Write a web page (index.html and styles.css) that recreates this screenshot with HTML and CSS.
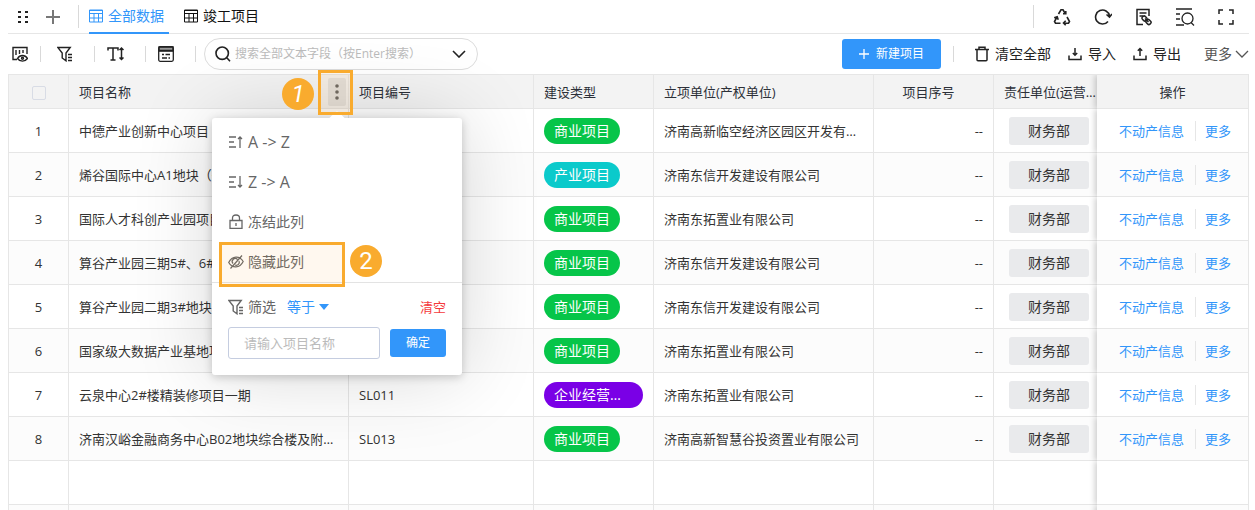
FILE: index.html
```
<!DOCTYPE html>
<html lang="zh-CN">
<head>
  <meta charset="utf-8">
  <title>全部数据</title>
  <meta name="viewport" content="width=device-width, initial-scale=1">
  <link rel="stylesheet" href="styles.css">
</head>
<body>
  <svg class="defs" aria-hidden="true">
    <symbol id="i-grid" viewBox="0 0 14 14"><path d="M.5 1h13v12H.5zM.5 4.500h13M.5 9h13M5 4.500V13M9.500 4.500V13M.5 1.500h13"/></symbol>
    <symbol id="i-filter" viewBox="0 0 16 16"><path d="M.8 1.500h12.400L9 7v7.800L5.200 12V7zM11 8.500h4M11 11.500h4M11 14.500h4" stroke-width="1.400"/></symbol>
    <symbol id="i-down" viewBox="0 0 14 8"><path d="M1 1l6 6 6-6"/></symbol>
  </svg>

  <nav class="tabbar">
    <button class="icon-btn drag" aria-label="拖动"><svg width="12" height="14" viewBox="0 0 12 14"><g fill="currentColor" stroke="none"><path d="M1 1h3v2H1zM8 1h3v2H8zM1 6h3v2H1zM8 6h3v2H8zM1 11h3v2H1zM8 11h3v2H8z"/></g></svg></button>
    <button class="icon-btn add" aria-label="添加"><svg width="14" height="14" viewBox="0 0 14 14"><path d="M7 0v14M0 7h14" stroke-width="2"/></svg></button>
    <span class="line"></span>
    <a class="tab active" href="#all"><svg width="14" height="14"><use href="#i-grid"/></svg>全部数据</a>
    <a class="tab" href="#done"><svg width="14" height="14"><use href="#i-grid"/></svg>竣工项目</a>
    <div class="tools">
      <span class="line"></span>
      <button class="icon-btn" aria-label="回收站"><svg width="18" height="18" viewBox="0 0 18 18" stroke-width="1.600"><path d="M5.500 6L8 1.800h2L12.500 6M10 5.800h2.800V3M14 9l2.500 4.500-1 1.700H11M12.700 12.700L10.500 15l2.200 2.300M7.500 15.200h-5l-1-1.700L4 9M1.200 9.700L4.200 8.700l1 3"/></svg></button>
      <button class="icon-btn" aria-label="刷新"><svg width="18" height="18" viewBox="0 0 18 18" stroke-width="1.600"><path d="M14 13.500a7 7 0 1 1 1.500-5.500M12.500 6.500l3 2.500L18 6"/></svg></button>
      <button class="icon-btn" aria-label="关联"><svg width="18" height="18" viewBox="0 0 18 18" stroke-width="1.500"><path d="M8 16.500H2v-15h12V8M4.500 5h7M4.500 8H8"/><rect x="7" y="8.500" width="5" height="4" rx="1.500" transform="rotate(45 9.500 10.500)"/><rect x="11" y="12" width="5" height="4" rx="1.500" transform="rotate(45 13.500 14)"/><path d="M10 10.500l3.500 3.500"/></svg></button>
      <button class="icon-btn" aria-label="查找"><svg width="20" height="18" viewBox="0 0 20 18" stroke-width="1.300"><path d="M1 1h16M1 6h4M1 11h4M1 17h8"/><circle cx="12.500" cy="10.500" r="5.500"/><path d="M16 14.500l3 3"/></svg></button>
      <button class="icon-btn" aria-label="全屏"><svg width="16" height="16" viewBox="0 0 16 16" stroke-width="1.500"><path d="M1 5V1h4M11 1h4v4M15 11v4h-4M5 15H1v-4"/></svg></button>
    </div>
  </nav>

  <div class="toolbar">
    <div class="view-tools">
      <button class="icon-btn" aria-label="显示列"><svg width="16" height="16" viewBox="0 0 16 16" stroke-width="1.400"><path d="M5 13.500H1V1.500h14V8M4 4v5M7.500 4v4M11 4v3M5.500 12.500c2.500-4 7.500-4 10 0-2.500 3.500-7.500 3.500-10 0z"/><circle cx="10.500" cy="12.300" r="1"/></svg></button>
      <span class="sep"></span>
      <button class="icon-btn" aria-label="筛选"><svg width="16" height="16"><use href="#i-filter"/></svg></button>
      <span class="sep"></span>
      <button class="icon-btn" aria-label="行高"><svg width="17" height="16" viewBox="0 0 17 16"><path d="M1 4.500V2h10v2.500M6 2v12M3.500 14h5M14.500 2v11M12.500 4l2-2 2 2M12.500 11.500l2 2 2-2" stroke-width="1.500"/></svg></button>
      <span class="sep"></span>
      <button class="icon-btn" aria-label="表单"><svg width="16" height="16" viewBox="0 0 16 16" stroke-width="1.300"><path d="M1 1h14v3.500H1z" fill="#999"/><rect x=".7" y=".7" width="14.600" height="14.600" rx="1.500"/><path d="M1 5h14M4 8.500h2M7.500 8.500H12M4 12h5M10.500 12H12"/></svg></button>
      <span class="sep"></span>
    </div>
    <label class="search">
      <svg width="16" height="16" viewBox="0 0 16 16" stroke-width="1.600"><circle cx="7.200" cy="7.200" r="6.200"/><path d="M11.800 11.800L15 15.200"/></svg>
      <input type="text" aria-label="搜索" placeholder="搜索全部文本字段（按Enter搜索）">
      <svg width="14" height="8" stroke-width="1.600"><use href="#i-down"/></svg>
    </label>
    <button class="primary create"><svg width="10" height="10" viewBox="0 0 10 10"><path d="M5 0v10M0 5h10" stroke-width="1.300"/></svg>新建项目</button>
    <span class="sep"></span>
    <div class="actions">
      <button class="text-btn"><svg width="14" height="16" viewBox="0 0 14 16" stroke-width="1.500"><path d="M0 3.500h14M4 3.500V1.200h6v2.300M2 3.500v10.200q0 1 1 1h8q1 0 1-1V3.500"/></svg>清空全部</button>
      <button class="text-btn"><svg width="14" height="14" viewBox="0 0 14 14" stroke-width="1.500"><path d="M1 8.500v4h12v-4M7 1v7M4.800 6L7 8.200 9.200 6"/></svg>导入</button>
      <button class="text-btn"><svg width="14" height="14" viewBox="0 0 14 14" stroke-width="1.500"><path d="M1 8.500v4h12v-4M7 9V1.500M4.800 3.700L7 1.500l2.200 2.200"/></svg>导出</button>
      <button class="text-btn more">更多<svg width="14" height="8" stroke-width="1.300"><use href="#i-down"/></svg></button>
    </div>
  </div>

  <main>
    <table class="grid">
      <colgroup>
        <col class="c-idx"><col class="c-name"><col class="c-code"><col class="c-type"><col class="c-org"><col class="c-no"><col><col class="c-ops">
      </colgroup>
      <thead>
        <tr>
          <th class="center"><input type="checkbox" aria-label="全选"></th>
          <th class="name-head">
            <div class="head-cell">
              项目名称
              <div class="col-menu">
                <button class="dots" aria-label="列菜单"><svg width="4" height="16" viewBox="0 0 4 16"><g fill="#666" stroke="none"><circle cx="2" cy="2" r="1.800"/><circle cx="2" cy="8" r="1.800"/><circle cx="2" cy="14" r="1.800"/></g></svg></button>
                <div class="popup">
                  <button class="item"><svg width="14" height="14" viewBox="0 0 14 14"><path d="M0 2h7M0 7h5M0 12h7M11 13V2M9 4l2-2 2 2" stroke-width="1.300"/></svg>A -&gt; Z</button>
                  <button class="item"><svg width="14" height="14" viewBox="0 0 14 14"><path d="M0 2h7M0 7h5M0 12h7M11 1v11M9 10l2 2 2-2" stroke-width="1.300"/></svg>Z -&gt; A</button>
                  <button class="item cn"><svg width="14" height="16" viewBox="0 0 14 16"><path d="M1 6.500h12v7.800H1zM3.500 6.500V4q0-3 3.500-3t3.500 3v2.500M7 9v3" stroke-width="1.300"/></svg>冻结此列</button>
                  <div class="hide-row">
                    <button class="item cn"><svg width="16" height="14" viewBox="0 0 16 14"><path d="M.7 7.500c3.500-7 11-7 14.500-1-3.500 7-11 7-14.500 1zM14 .5L2.500 13.500M5 8.500a3 3 0 0 1 4.500-4M11 6a3 3 0 0 1-4 4" stroke-width="1.200"/></svg>隐藏此列</button>
                    <span class="mark mark-hide"></span>
                    <span class="badge badge-two">2</span>
                  </div>
                  <div class="filter">
                    <div class="filter-top">
                      <svg width="16" height="16"><use href="#i-filter"/></svg>
                      <label for="op">筛选</label>
                      <select id="op"><option>等于</option></select>
                      <svg class="caret" width="10" height="6" viewBox="0 0 10 6"><path d="M0 0h10L5 6z" fill="currentColor" stroke="none"/></svg>
                      <button class="clear">清空</button>
                    </div>
                    <div class="filter-form">
                      <input type="text" aria-label="项目名称" placeholder="请输入项目名称">
                      <button class="primary">确定</button>
                    </div>
                  </div>
                </div>
                <span class="mark mark-menu"></span>
                <span class="badge badge-one">1</span>
              </div>
            </div>
          </th>
          <th>项目编号</th>
          <th>建设类型</th>
          <th>立项单位(产权单位)</th>
          <th class="no-head center">项目序号</th>
          <th class="cut">责任单位(运营单位)</th>
          <th class="ops-head center">操作</th>
        </tr>
      </thead>
      <tbody>
        <tr>
          <td class="center">1</td><td>中德产业创新中心项目</td><td></td>
          <td><span class="tag green">商业项目</span></td><td>济南高新临空经济区园区开发有限公司</td>
          <td class="right">--</td><td class="dept-cell"><span class="dept">财务部</span></td>
          <td class="ops"><div><a href="#info">不动产信息</a><a href="#more">更多</a></div></td>
        </tr>
        <tr>
          <td class="center">2</td><td>烯谷国际中心A1地块（一期）</td><td></td>
          <td><span class="tag cyan">产业项目</span></td><td>济南东信开发建设有限公司</td>
          <td class="right">--</td><td class="dept-cell"><span class="dept">财务部</span></td>
          <td class="ops"><div><a href="#info">不动产信息</a><a href="#more">更多</a></div></td>
        </tr>
        <tr>
          <td class="center">3</td><td>国际人才科创产业园项目</td><td></td>
          <td><span class="tag green">商业项目</span></td><td>济南东拓置业有限公司</td>
          <td class="right">--</td><td class="dept-cell"><span class="dept">财务部</span></td>
          <td class="ops"><div><a href="#info">不动产信息</a><a href="#more">更多</a></div></td>
        </tr>
        <tr>
          <td class="center">4</td><td>算谷产业园三期5#、6#地块</td><td></td>
          <td><span class="tag green">商业项目</span></td><td>济南东信开发建设有限公司</td>
          <td class="right">--</td><td class="dept-cell"><span class="dept">财务部</span></td>
          <td class="ops"><div><a href="#info">不动产信息</a><a href="#more">更多</a></div></td>
        </tr>
        <tr>
          <td class="center">5</td><td>算谷产业园二期3#地块</td><td></td>
          <td><span class="tag green">商业项目</span></td><td>济南东信开发建设有限公司</td>
          <td class="right">--</td><td class="dept-cell"><span class="dept">财务部</span></td>
          <td class="ops"><div><a href="#info">不动产信息</a><a href="#more">更多</a></div></td>
        </tr>
        <tr>
          <td class="center">6</td><td>国家级大数据产业基地项目</td><td></td>
          <td><span class="tag green">商业项目</span></td><td>济南东拓置业有限公司</td>
          <td class="right">--</td><td class="dept-cell"><span class="dept">财务部</span></td>
          <td class="ops"><div><a href="#info">不动产信息</a><a href="#more">更多</a></div></td>
        </tr>
        <tr>
          <td class="center">7</td><td>云泉中心2#楼精装修项目一期</td><td>SL011</td>
          <td><span class="tag purple">企业经营性项目</span></td><td>济南东拓置业有限公司</td>
          <td class="right">--</td><td class="dept-cell"><span class="dept">财务部</span></td>
          <td class="ops"><div><a href="#info">不动产信息</a><a href="#more">更多</a></div></td>
        </tr>
        <tr>
          <td class="center">8</td><td>济南汉峪金融商务中心B02地块综合楼及附属设施</td><td>SL013</td>
          <td><span class="tag green">商业项目</span></td><td>济南高新智慧谷投资置业有限公司</td>
          <td class="right">--</td><td class="dept-cell"><span class="dept">财务部</span></td>
          <td class="ops"><div><a href="#info">不动产信息</a><a href="#more">更多</a></div></td>
        </tr>
        <tr><td></td><td></td><td></td><td></td><td></td><td></td><td class="dept-cell"></td><td class="ops"></td></tr>
        <tr><td></td><td></td><td></td><td></td><td></td><td></td><td class="dept-cell"></td><td class="ops"></td></tr>
      </tbody>
    </table>
  </main>
</body>
</html>
```
FILE: styles.css
```
* {
  box-sizing: border-box;
}

body {
  margin: 0;
  padding: 0 6px 0 8px;
  height: 100vh;
  overflow: hidden;
  background: #fff;
  color: #333;
  font: 13px/20px "Open Sans", "Noto Sans CJK SC", sans-serif;
}

button,
input,
select {
  font: inherit;
  color: inherit;
  margin: 0;
}

button {
  padding: 0;
  border: 0;
  background: none;
  cursor: pointer;
}

a {
  color: #3296fa;
  text-decoration: none;
}

svg {
  flex: none;
  fill: none;
  stroke: currentColor;
}

.defs {
  display: none;
}

/* tabs */
.tabbar {
  display: flex;
  align-items: center;
  height: 34px;
  border-bottom: 1px solid #e6e6e6;
  color: #222;
  font-size: 14px;
}

.icon-btn {
  display: flex;
  align-items: center;
  justify-content: center;
}

.drag {
  margin-left: 9px;
}

.add {
  margin: 0 18px 0 17px;
  color: #777;
}

.line {
  width: 1px;
  height: 23px;
  background: #d9d9d9;
}

.tab {
  display: flex;
  align-items: center;
  gap: 5px;
  height: 34px;
  margin-left: 10px;
  padding-right: 5px;
  border-bottom: 2px solid transparent;
  color: #111;
}

.tab + .tab {
  margin-left: 15px;
}

.tab.active {
  color: #3296fa;
  border-color: #3296fa;
}

.tools {
  display: flex;
  align-items: center;
  margin-left: auto;
  padding-right: 13px;
}

.tools .icon-btn {
  width: 20px;
  margin-left: 21px;
}

.tools .line + .icon-btn {
  margin-left: 18px;
}

/* toolbar */
.toolbar {
  display: flex;
  align-items: center;
  height: 40px;
  color: #222;
  font-size: 14px;
}

.view-tools {
  display: flex;
  align-items: center;
  padding-left: 4px;
}

.sep {
  width: 1px;
  height: 16px;
  background: #d9d9d9;
}

.view-tools .sep {
  margin: 0 12px 0 21px;
}

.view-tools .sep:nth-child(2) {
  margin: 0 16px 0 12px;
}

.view-tools .sep:last-child {
  margin-right: 8px;
}

.search {
  display: flex;
  align-items: center;
  gap: 4px;
  width: 274px;
  height: 32px;
  padding: 0 11px 0 10px;
  border: 1px solid #dcdcdc;
  border-radius: 16px;
}

.search input {
  flex: 1;
  min-width: 0;
  padding: 0;
  border: 0;
  outline: 0;
  background: none;
  font-size: 12px;
}

::placeholder {
  color: #bbb;
  opacity: 1;
}

.primary {
  display: flex;
  align-items: center;
  justify-content: center;
  border-radius: 3px;
  background: #3296fa;
  color: #fff;
  font-size: 12px;
}

.create {
  gap: 7px;
  width: 99px;
  height: 30px;
  margin: 0 12px 0 auto;
}

.actions {
  display: flex;
  gap: 17px;
  margin-left: 21px;
}

.text-btn {
  display: flex;
  align-items: center;
  gap: 6px;
}

.text-btn.more {
  gap: 3px;
  margin-left: 6px;
  color: #555;
}

/* table */
.grid {
  width: 100%;
  table-layout: fixed;
  border-collapse: separate;
  border-spacing: 0;
  border-top: 1px solid #e6e6e6;
  border-left: 1px solid #e6e6e6;
}

.c-idx { width: 60px; }
.c-name { width: 280px; }
.c-code { width: 185px; }
.c-type { width: 120px; }
.c-org { width: 220px; }
.c-no { width: 120px; }
.c-ops { width: 152px; }

th,
td {
  padding: 0 10px;
  border-right: 1px solid #e6e6e6;
  border-bottom: 1px solid #e6e6e6;
  text-align: left;
  white-space: nowrap;
  overflow: hidden;
  text-overflow: ellipsis;
}

th {
  height: 34px;
  background: #f3f3f3;
  color: #2c3038;
  font-weight: normal;
}

td {
  height: 44px;
}

tbody tr:nth-child(even) {
  background: #fcfcfc;
}

.center {
  text-align: center;
}

.right {
  text-align: right;
}

th.no-head {
  padding-right: 20px;
}

th.cut {
  padding-right: 0;
  border-right: 0;
}

th input[type=checkbox] {
  appearance: none;
  width: 14px;
  height: 14px;
  border: 1px solid #d8dce5;
  border-radius: 2px;
  vertical-align: middle;
}

.tag {
  display: inline-block;
  max-width: 100%;
  height: 26px;
  padding: 0 10px;
  border-radius: 13px;
  color: #fff;
  font-size: 14px;
  line-height: 26px;
  vertical-align: middle;
  overflow: hidden;
  text-overflow: ellipsis;
}

.green { background: #06c549; }
.cyan { background: #0bcacb; }
.purple { background: #7a00e6; }

.dept-cell {
  padding: 0 8px 0 15px;
  border-right: 0;
}

.dept {
  display: block;
  height: 28px;
  border-radius: 3px;
  background: #e9eaec;
  font-size: 14px;
  line-height: 28px;
  text-align: center;
}

.ops,
.ops-head {
  box-shadow: -2px 0 6px rgba(0, 0, 0, .2);
  clip-path: inset(0 0 0 -10px);
}

.ops {
  padding: 0 0 0 22px;
  background: #fff;
}

tr:nth-child(even) .ops {
  background: #fcfcfc;
}

.ops div {
  display: flex;
}

.ops a + a {
  margin-left: 11px;
  padding-left: 9px;
  border-left: 1px solid #e6e6e6;
}

/* column menu */
.name-head {
  overflow: visible;
}

.head-cell {
  display: flex;
  align-items: center;
  justify-content: space-between;
}

.col-menu {
  position: relative;
  margin-right: -8px;
  z-index: 5;
}

.dots {
  display: flex;
  align-items: center;
  justify-content: center;
  width: 18px;
  height: 28px;
  border-radius: 2px;
  background: #e3e3e3;
}

.popup {
  position: absolute;
  top: 40px;
  left: 50%;
  width: 250px;
  margin-left: -125px;
  padding-top: 4px;
  border-radius: 3px;
  background: #fff;
  box-shadow: 0 2px 10px rgba(0, 0, 0, .2), 0 0 80px rgba(0, 0, 0, .16);
  color: #666;
  font-size: 14px;
}

.popup::before {
  content: "";
  position: absolute;
  top: -5px;
  left: 50%;
  width: 12px;
  height: 12px;
  margin-left: -6px;
  border-radius: 2px;
  background: #fff;
  transform: rotate(45deg);
}

.item {
  display: flex;
  align-items: center;
  gap: 5px;
  width: 100%;
  height: 40px;
  padding-left: 17px;
  font-size: 16px;
}

.item.cn {
  font-size: 14px;
}

.hide-row {
  position: relative;
}

.hide-row .item {
  gap: 4px;
  padding-left: 16px;
}

.filter {
  padding: 14px 16px 16px;
  border-top: 1px solid #e3e3e3;
}

.filter-top {
  display: flex;
  align-items: center;
}

.filter-top label {
  margin-left: 4px;
}

.filter-top select {
  appearance: none;
  margin: 0 4px 0 11px;
  padding: 0;
  border: 0;
  background: none;
  color: #3296fa;
}

.caret {
  color: #3296fa;
}

.clear {
  margin-left: auto;
  color: #f5393c;
  font-size: 13px;
}

.filter-form {
  display: flex;
  align-items: center;
  gap: 10px;
  margin-top: 10px;
}

.filter-form input {
  flex: 1;
  min-width: 0;
  height: 32px;
  padding: 0 15px;
  border: 1px solid #c5cde0;
  border-radius: 3px;
  font-size: 13px;
}

.filter-form .primary {
  width: 56px;
  height: 28px;
}

/* step marks */
.mark {
  position: absolute;
  border: 3px solid #f9ab2e;
  background: rgba(249, 171, 46, .08);
  pointer-events: none;
}

.mark-menu {
  inset: -8px -7px -9px -10px;
}

.mark-hide {
  top: 0;
  left: 7px;
  width: 126px;
  height: 45px;
}

.badge {
  position: absolute;
  width: 32px;
  height: 32px;
  border-radius: 50%;
  background: #f9ab2e;
  color: #fff;
  font: 24px/32px Roboto, sans-serif;
  text-align: center;
}

.badge-one {
  top: 0;
  right: 32px;
  font-style: italic;
}

.badge-two {
  top: 3px;
  left: 138px;
}
```
